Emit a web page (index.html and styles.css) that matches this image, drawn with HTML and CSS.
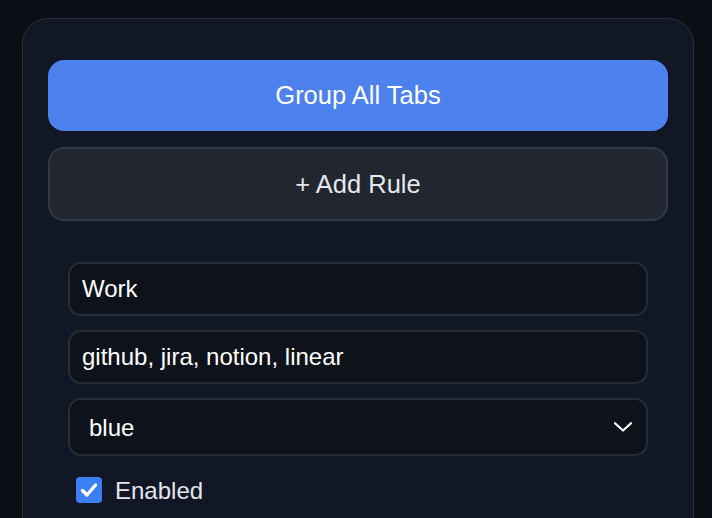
FILE: index.html
```html
<!DOCTYPE html>
<html lang="en">
<head>
<meta charset="utf-8">
<title>Tab Grouper</title>
<link rel="stylesheet" href="styles.css">
</head>
<body>
<main class="card">
  <button class="btn btn-primary" type="button">Group All Tabs</button>
  <button class="btn btn-secondary" type="button">+ Add Rule</button>
  <section class="rule">
    <input class="field" type="text" value="Work">
    <input class="field" type="text" value="github, jira, notion, linear">
    <div class="select-wrap">
      <select class="field select">
        <option selected>blue</option>
        <option>red</option>
        <option>green</option>
      </select>
      <svg class="chevron" width="18" height="10" viewBox="0 0 18 10" aria-hidden="true">
        <path d="M1 1.2 L9 8.5 L17 1.2" fill="none" stroke="#ffffff" stroke-width="2.2" stroke-linecap="round" stroke-linejoin="round"/>
      </svg>
    </div>
    <label class="check-row">
      <span class="checkbox" role="checkbox" aria-checked="true">
        <svg width="18" height="16" viewBox="0 0 18 16" aria-hidden="true">
          <path d="M2.5 8.5 L7 13 L15.5 3" fill="none" stroke="#ffffff" stroke-width="3.4" stroke-linecap="round" stroke-linejoin="round"/>
        </svg>
      </span>
      <span class="check-label">Enabled</span>
    </label>
  </section>
</main>
</body>
</html>
```

FILE: styles.css
```css
* {
  box-sizing: border-box;
}

html, body {
  margin: 0;
  padding: 0;
  background: #0b0e15;
  font-family: "Liberation Sans", Arial, sans-serif;
}

body {
  padding: 18px 18px 0 22px;
  height: 518px;
  overflow: hidden;
}

.card {
  width: 672px;
  min-height: 560px;
  background: #121725;
  border: 1px solid #2b2f3a;
  border-radius: 26px;
  padding: 41px 25px 40px 25px;
  display: flex;
  flex-direction: column;
}

.btn {
  width: 620px;
  font-family: inherit;
  font-size: 25.5px;
  border-radius: 16px;
  cursor: pointer;
  display: flex;
  align-items: center;
  justify-content: center;
}

.btn-primary {
  height: 71px;
  background: #4d82ee;
  border: none;
  color: #ffffff;
  padding-bottom: 1px;
}

.btn-secondary {
  margin-top: 16px;
  height: 74px;
  background: #212631;
  border: 2px solid #333845;
  color: #e6e8ec;
}

.rule {
  margin-top: 41px;
  padding: 0 20px;
  display: flex;
  flex-direction: column;
}

.field {
  width: 580px;
  height: 54px;
  background: #0e121b;
  border: 2px solid #272c37;
  border-radius: 13px;
  color: #ffffff;
  font-family: inherit;
  font-size: 24px;
  padding: 0 12px;
  outline: none;
}

.field + .field {
  margin-top: 14px;
}

.select-wrap {
  position: relative;
  margin-top: 14px;
}

.select {
  height: 58px;
  appearance: none;
  -webkit-appearance: none;
  padding: 0 19px;
}

.chevron {
  position: absolute;
  right: 16px;
  top: 24px;
}

.check-row {
  margin-top: 18px;
  padding-left: 8px;
  display: flex;
  align-items: center;
  gap: 13px;
}

.checkbox {
  width: 26px;
  height: 26px;
  border-radius: 4px;
  background: #3b7ff6;
  display: flex;
  align-items: center;
  justify-content: center;
}

.check-label {
  font-size: 24px;
  color: #e3e5ea;
  padding-top: 3px;
}
```
